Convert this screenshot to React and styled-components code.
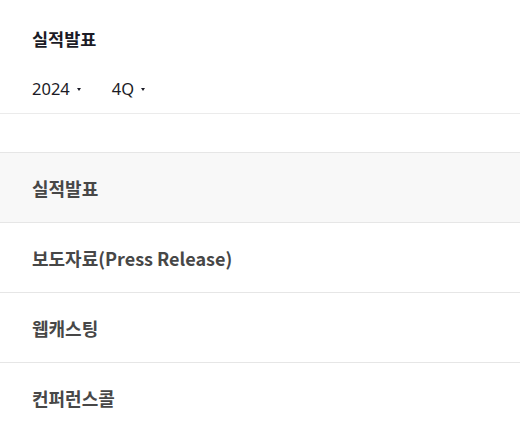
import React from 'react';
import styled, { createGlobalStyle } from 'styled-components';

const GlobalStyle = createGlobalStyle`
  html, body {
    margin: 0;
    padding: 0;
    background: #ffffff;
    font-family: "Noto Sans CJK KR", "Noto Sans", sans-serif;
  }
`;

const Page = styled.div`
  width: 520px;
  height: 422px;
  overflow: hidden;
  background: #ffffff;
`;

const Header = styled.div`
  padding: 26px 32px 0;
  border-bottom: 1px solid #ebebeb;
`;

const Title = styled.h2`
  margin: 0;
  font-size: 17.5px;
  line-height: 26px;
  font-weight: 700;
  color: #1b1b26;
`;

const Filters = styled.div`
  display: flex;
  align-items: center;
  gap: 31px;
  padding: 25px 0 12px;
`;

const Select = styled.button`
  display: inline-flex;
  align-items: center;
  gap: 7px;
  padding: 0;
  border: 0;
  background: none;
  font-family: "Noto Sans", "Noto Sans CJK KR", sans-serif;
  font-size: 16.5px;
  line-height: 24px;
  color: #1b1b26;
  cursor: pointer;
`;

const Caret = styled.span`
  width: 0;
  height: 0;
  border-left: 2.5px solid transparent;
  border-right: 2.5px solid transparent;
  border-top: 3px solid #1b1b26;
`;

const Menu = styled.ul`
  list-style: none;
  margin: 38px 0 0;
  padding: 0;
  border-top: 1px solid #e6e6e6;
`;

const Item = styled.li`
  height: 69px;
  display: flex;
  align-items: center;
  padding: 0 32px;
  border-bottom: 1px solid #e6e6e6;
  background: ${(p) => (p.$active ? '#f8f8f8' : '#ffffff')};
  font-size: 18px;
  font-weight: 700;
  color: #474747;
`;

const items = ['실적발표', '보도자료(Press Release)', '웹캐스팅', '컨퍼런스콜'];

export default function App() {
  return (
    <Page>
      <GlobalStyle />
      <Header>
        <Title>실적발표</Title>
        <Filters>
          <Select>
            2024 <Caret />
          </Select>
          <Select>
            4Q <Caret />
          </Select>
        </Filters>
      </Header>
      <Menu>
        {items.map((label, i) => (
          <Item key={label} $active={i === 0}>
            {label}
          </Item>
        ))}
      </Menu>
    </Page>
  );
}
